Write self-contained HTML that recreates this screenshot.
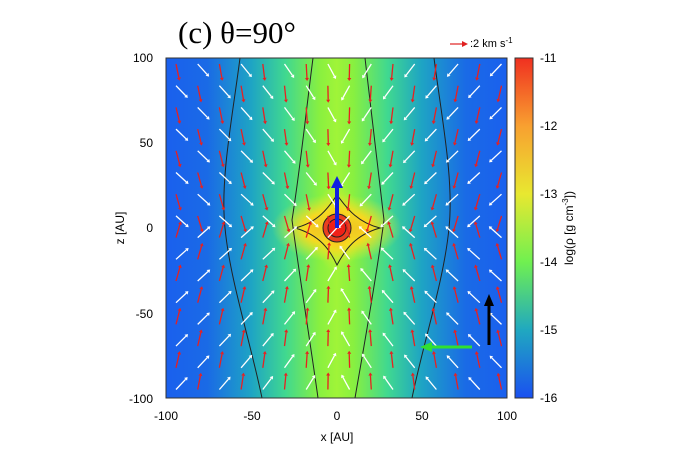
<!DOCTYPE html><html><head><style>
body{margin:0;width:673px;height:471px;background:#fff;overflow:hidden;font-family:"Liberation Sans",sans-serif;}
</style></head><body>
<svg width="673" height="471" xmlns="http://www.w3.org/2000/svg" style="position:absolute;left:0;top:0">
<defs>
<linearGradient id="bg" x1="0" x2="1" y1="0" y2="0">
<stop offset="0" stop-color="#1a60ee"/><stop offset="0.12" stop-color="#1a6ae6"/>
<stop offset="0.25" stop-color="#1ea4c4"/><stop offset="0.35" stop-color="#40d890"/>
<stop offset="0.45" stop-color="#88f040"/><stop offset="0.5" stop-color="#a0f438"/>
<stop offset="0.55" stop-color="#88f040"/><stop offset="0.65" stop-color="#40d890"/>
<stop offset="0.75" stop-color="#1ea4c4"/><stop offset="0.88" stop-color="#1a6ae6"/><stop offset="1" stop-color="#1a60ee"/>
</linearGradient>
<radialGradient id="core"><stop offset="0" stop-color="#f0a020"/><stop offset="0.5" stop-color="#f8d820"/><stop offset="1" stop-color="#d8f030" stop-opacity="0"/></radialGradient>
<linearGradient id="cb" x1="0" x2="0" y1="0" y2="1">
<stop offset="0" stop-color="#f03020"/><stop offset="0.2" stop-color="#f8a030"/><stop offset="0.4" stop-color="#e8e830"/>
<stop offset="0.6" stop-color="#70f050"/><stop offset="0.8" stop-color="#20a8c0"/><stop offset="1" stop-color="#1a50f0"/>
</linearGradient>
</defs>
<rect x="166" y="58" width="341" height="340" fill="url(#bg)"/>
<ellipse cx="337" cy="228" rx="65" ry="34" fill="url(#core)"/>
<ellipse cx="337" cy="228" rx="24" ry="45" fill="url(#core)" opacity="0.6"/>
<g fill="none" stroke="#222" stroke-width="1">
<path d="M240 58 C232 120 220 180 225 228 C230 280 250 340 262 398"/>
<path d="M434 58 C442 120 454 180 449 228 C444 280 424 340 412 398"/>
<path d="M313 58 C305 120 300 170 292 220 C300 280 310 340 318 398"/>
<path d="M365 58 C372 120 378 170 384 220 C376 280 365 340 355 398"/>
<path d="M295 228 C320 222 330 205 337 195 C345 205 355 222 380 228 C355 235 345 250 337 265 C330 250 320 235 295 228Z"/>
</g>
<circle cx="337" cy="228" r="14" fill="#e84020" stroke="#222"/>
<circle cx="337" cy="228" r="9" fill="#f02018" stroke="#222"/>
<g id="arr"></g>
<line x1="337" y1="228" x2="337" y2="186" stroke="#1020e0" stroke-width="4"/>
<polygon points="331,188 343,188 337,176" fill="#1020e0"/>
<line x1="489" y1="345" x2="489" y2="305" stroke="#000" stroke-width="3"/>
<polygon points="484,306 494,306 489,294" fill="#000"/>
<line x1="472" y1="347" x2="430" y2="347" stroke="#30e030" stroke-width="3"/>
<polygon points="432,342 432,352 420,347" fill="#30e030"/>
<rect x="166" y="58" width="341" height="340" fill="none" stroke="#333" stroke-width="1"/>
<rect x="515" y="58" width="18" height="340" fill="url(#cb)" stroke="#333"/>
<g font-size="12" fill="#000">
<text x="153" y="62" text-anchor="end">100</text>
<text x="153" y="147" text-anchor="end">50</text>
<text x="153" y="232" text-anchor="end">0</text>
<text x="153" y="318" text-anchor="end">-50</text>
<text x="153" y="403" text-anchor="end">-100</text>
<text x="166" y="420" text-anchor="middle">-100</text>
<text x="252" y="420" text-anchor="middle">-50</text>
<text x="337" y="420" text-anchor="middle">0</text>
<text x="422" y="420" text-anchor="middle">50</text>
<text x="507" y="420" text-anchor="middle">100</text>
<text x="337" y="441" text-anchor="middle">x [AU]</text>
<text transform="translate(124,228) rotate(-90)" text-anchor="middle">z [AU]</text>
<text x="540" y="62">-11</text><text x="540" y="130">-12</text><text x="540" y="198">-13</text>
<text x="540" y="266">-14</text><text x="540" y="334">-15</text><text x="540" y="402">-16</text>
<text transform="translate(573,228) rotate(-90)" text-anchor="middle">log(ρ [g cm<tspan font-size="8" dy="-5">-3</tspan><tspan dy="5">])</tspan></text>
<text x="470" y="47" font-size="11">:2 km s<tspan font-size="8" dy="-4">-1</tspan></text>
</g>
<line x1="450" y1="44" x2="464" y2="44" stroke="#e02020" stroke-width="1.2"/>
<polygon points="462,41 468,44 462,47" fill="#e02020"/>
<text x="178" y="43" font-family="Liberation Serif,serif" font-size="31">(c) θ=90°</text>
</svg>
<script>
var g=document.getElementById('arr'),s='';
for(var i=0;i<16;i++)for(var j=0;j<16;j++){
 var x=176+i*21.7,y=64+j*21.7,dx=x-337,dy=y-228,r=Math.hypot(dx,dy)||1;
 var red=((i+j)%2==0);
 var vx,vy,L=14;
 if(red){vx=-dx/r*0.3;vy=-Math.sign(dy)*1;}else{vx=-dx/r*0.5+(dx>0?-0.4:0.4);vy=-Math.sign(dy)*0.8;}
 if(Math.abs(dy)<8){vy=0;vx=-Math.sign(dx);}
 var n=Math.hypot(vx,vy)||1;vx/=n;vy/=n;
 var x2=x+vx*L,y2=y+vy*L,c=red?'#e82020':'#fff';
 s+='<line x1="'+x+'" y1="'+y+'" x2="'+x2+'" y2="'+y2+'" stroke="'+c+'" stroke-width="1.3"/>';
 var px=-vy,py=vx;
 s+='<polygon points="'+(x2+vx*3)+','+(y2+vy*3)+' '+(x2+px*2)+','+(y2+py*2)+' '+(x2-px*2)+','+(y2-py*2)+'" fill="'+c+'"/>';
}
g.innerHTML=s;
</script>
</body></html>
